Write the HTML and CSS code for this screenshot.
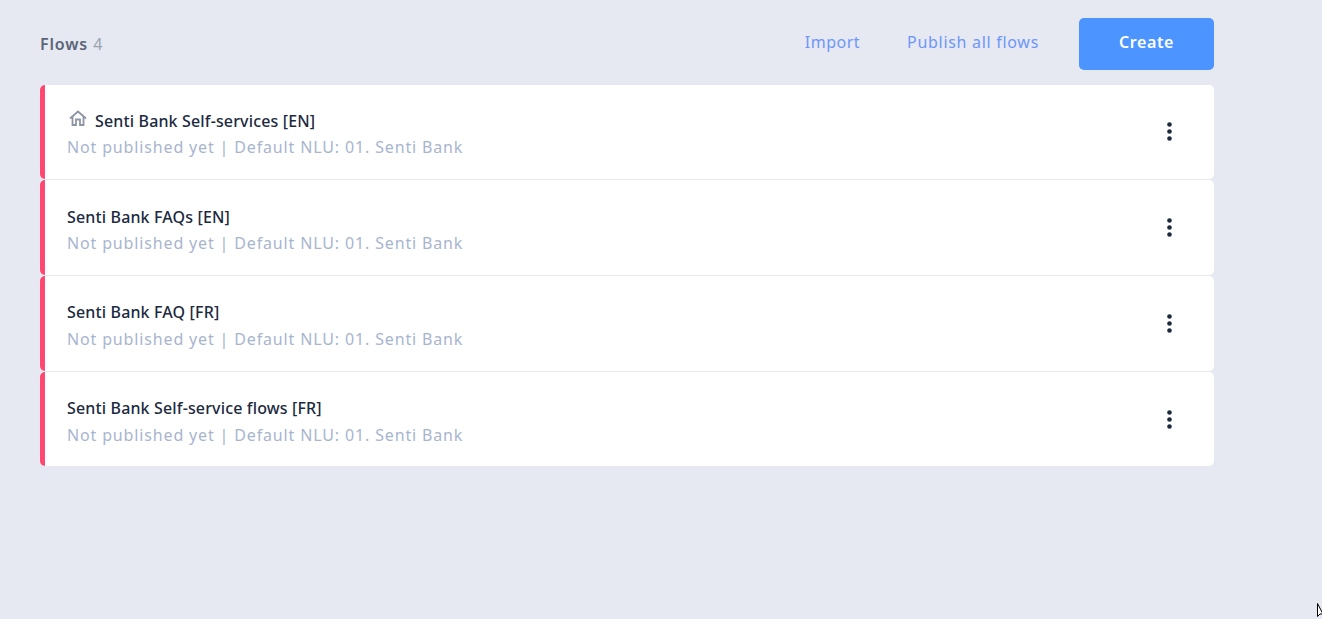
FILE: index.html
```html
<!DOCTYPE html>
<html lang="en">
<head>
<meta charset="utf-8">
<title>Flows</title>
<link rel="stylesheet" href="styles.css">
</head>
<body>
<main class="page">
  <header class="toolbar">
    <h1 class="heading">Flows <span class="count">4</span></h1>
    <nav class="actions">
      <a class="link">Import</a>
      <a class="link">Publish all flows</a>
      <button class="create">Create</button>
    </nav>
  </header>
  <ul class="list">
    <li class="card">
      <div class="info">
        <div class="title"><svg class="home" viewBox="0 0 18 16" width="18" height="16" fill="none" stroke="#8d95a5" stroke-width="1.8"><path d="M1 8.5 9 1.5l8 7"/><path d="M3.5 6.5V15h3.5V9.5h4V15h3.5V6.5"/></svg>Senti Bank Self-services [EN]</div>
        <div class="meta">Not published yet | Default NLU: 01. Senti Bank</div>
      </div>
      <button class="more" aria-label="More"><svg class="dots" viewBox="0 0 5 19" width="5" height="19"><circle cx="2.5" cy="2.5" r="2.3"/><circle cx="2.5" cy="9.5" r="2.3"/><circle cx="2.5" cy="16.5" r="2.3"/></svg></button>
    </li>
    <li class="card">
      <div class="info">
        <div class="title">Senti Bank FAQs [EN]</div>
        <div class="meta">Not published yet | Default NLU: 01. Senti Bank</div>
      </div>
      <button class="more" aria-label="More"><svg class="dots" viewBox="0 0 5 19" width="5" height="19"><circle cx="2.5" cy="2.5" r="2.3"/><circle cx="2.5" cy="9.5" r="2.3"/><circle cx="2.5" cy="16.5" r="2.3"/></svg></button>
    </li>
    <li class="card">
      <div class="info">
        <div class="title">Senti Bank FAQ [FR]</div>
        <div class="meta">Not published yet | Default NLU: 01. Senti Bank</div>
      </div>
      <button class="more" aria-label="More"><svg class="dots" viewBox="0 0 5 19" width="5" height="19"><circle cx="2.5" cy="2.5" r="2.3"/><circle cx="2.5" cy="9.5" r="2.3"/><circle cx="2.5" cy="16.5" r="2.3"/></svg></button>
    </li>
    <li class="card">
      <div class="info">
        <div class="title">Senti Bank Self-service flows [FR]</div>
        <div class="meta">Not published yet | Default NLU: 01. Senti Bank</div>
      </div>
      <button class="more" aria-label="More"><svg class="dots" viewBox="0 0 5 19" width="5" height="19"><circle cx="2.5" cy="2.5" r="2.3"/><circle cx="2.5" cy="9.5" r="2.3"/><circle cx="2.5" cy="16.5" r="2.3"/></svg></button>
    </li>
  </ul>
</main>
<svg class="cursor" viewBox="0 0 6 16" width="6" height="16" fill="#fff" stroke="#000" stroke-width="1"><path d="M.5.5v13l2.5-2.5 3 0z"/></svg>
</body>
</html>
```
FILE: styles.css
```css
html, body { margin: 0; padding: 0; height: 100%; overflow: hidden; }
body { background: #e6e9f2; font-family: "Noto Sans", "Open Sans", sans-serif; }
.page { width: 1174px; margin-left: 40px; padding-top: 18px; }
.toolbar { display: flex; justify-content: space-between; align-items: center; height: 52px; margin-bottom: 14.6px; }
.heading { margin: 0 0 1px; font-size: 16px; font-weight: 600; color: #5c6577; letter-spacing: .85px; }
.count { font-weight: 400; color: #9aa2b1; font-size: 16px; }
.actions { display: flex; align-items: center; }
.link { font-size: 16px; color: #6d96fb; letter-spacing: .5px; margin: 0 47px 4px 0; }
.link + .link { letter-spacing: .7px; margin-right: 40px; }
.create { width: 135px; height: 52px; border: 0; border-radius: 5px; background: #4c94ff; color: #fff; font: 600 16px "Noto Sans", sans-serif; letter-spacing: .6px; padding: 0 0 4px; }
.list { list-style: none; margin: 0; padding: 0; display: flex; flex-direction: column; gap: 1.1px; }
.card { box-sizing: border-box; height: 94.6px; display: flex; align-items: center; justify-content: space-between; background: #fff; border-left: 5px solid #ff4773; border-radius: 5px; padding: 0 42px 0 22px; }
.info { padding-top: 3.6px; }
.title { display: flex; align-items: center; font-size: 16px; font-weight: 500; color: #1c2a40; letter-spacing: .15px; line-height: 24px; }
.home { margin: -6px 8px 0 2px; }
.meta { font-size: 16px; color: #a8b5ce; letter-spacing: .85px; line-height: 22px; margin-top: 3.6px; }
.more { display: flex; padding: .2px 0 0; border: 0; background: none; }
.dots { display: block; fill: #1c2a40; }
.cursor { position: absolute; left: 1317px; top: 603px; }
```
